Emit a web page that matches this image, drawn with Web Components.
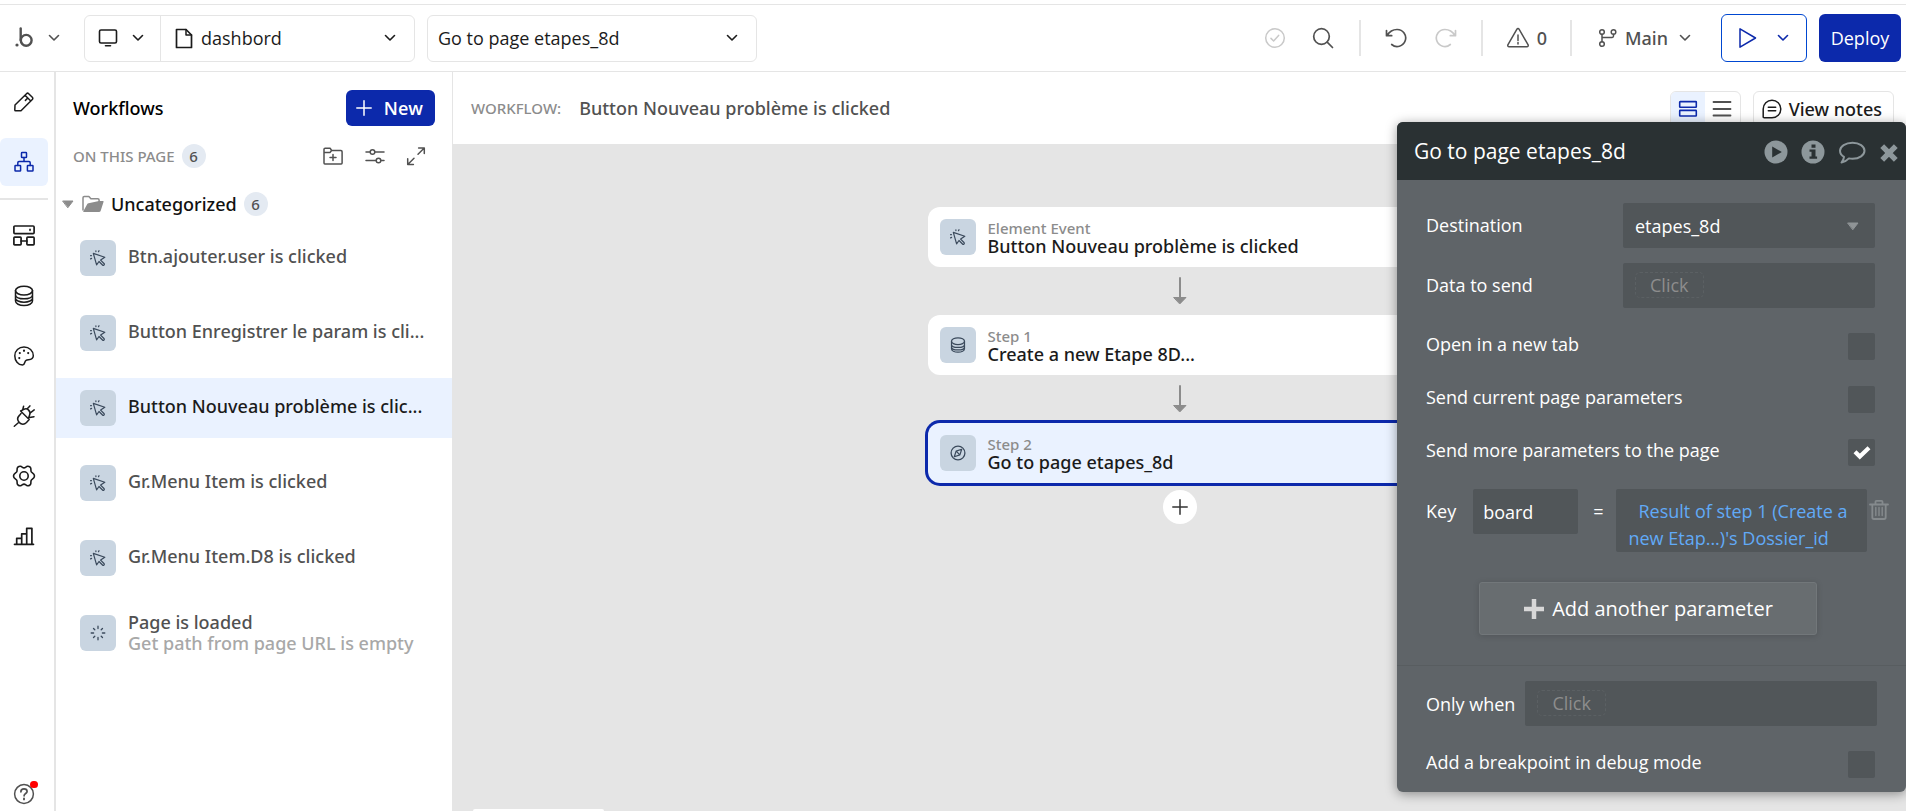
<!DOCTYPE html>
<html lang="en">
<head>
<meta charset="utf-8">
<meta name="viewport" content="width=device-width, initial-scale=1">
<title>Workflow editor</title>
<style>
  :root {
    --blue: #0c29ab;
    --blue-soft: #eaf2ff;
    --line: #e5e5e5;
    --ink: #1b1b1b;
    --ink-2: #515151;
    --ink-3: #8c8c8c;
    --tile: #c9d5e1;
    --field: #515659;
    --medium: "Noto Sans", "Open Sans", sans-serif;
  }
  body {
    margin: 0;
    font-family: "Open Sans", "Noto Sans", sans-serif;
    font-size: 18px;
    line-height: 24px;
    color: var(--ink);
    background: #fff;
  }
</style>
</head>
<body>
<flow-app></flow-app>

<script>
const ICONS = {
  logo: [20, 22, '<circle cx="3" cy="18" r="1.6" fill="currentColor" stroke="none"/><path d="M6.700 1.500v11.500" stroke-width="2.400"/><circle cx="12.200" cy="13.300" r="5.400" stroke-width="2.400"/>'],
  chevron: [12, 8, '<path d="M1.500 1.500 6 6l4.500-4.500" stroke-width="1.600"/>'],
  monitor: [20, 18, '<rect x="1.500" y="1" width="17" height="13" rx="1.500" stroke-width="1.600"/><path d="M7.500 16.700h5" stroke-width="1.600"/>'],
  page: [18, 21, '<path d="M1.500 1.500h9.500l5.500 5.500v12.500h-15z" stroke-width="1.700"/><path d="M11 1.500v5.500h5.500" stroke-width="1.500"/>'],
  checkCircle: [22, 22, '<circle cx="11" cy="11" r="9.300"/><path d="m7 11.400 2.600 2.600 5-5.600"/>'],
  search: [22, 22, '<circle cx="9.500" cy="9.500" r="7.800" stroke-width="1.700"/><path d="m15.200 15.200 5.300 5.300" stroke-width="1.700"/>'],
  undo: [22, 22, '<path d="M1.500 3.500v5.200h5.200M2 8.500C4.500 4.500 8 2.500 12 2.500a8.500 8.500 0 1 1-5.300 15" stroke-width="1.700"/>'],
  redo: [22, 22, '<path d="M20.500 3.500v5.200h-5.200M20 8.500C17.500 4.500 14 2.500 10 2.500a8.500 8.500 0 1 0 5.300 15" stroke-width="1.700"/>'],
  warning: [24, 22, '<path d="M12 1.600c.5 0 .9.300 1.200.8l8.800 15.300c.6 1.100 0 2-1.100 2H3.100c-1.100 0-1.700-.9-1.100-2l8.800-15.300c.3-.5.700-.8 1.200-.8z"/><path d="M12 8v5.500M12 15.400v1.600"/>'],
  branch: [20, 20, '<circle cx="4" cy="4" r="2.300"/><circle cx="15.500" cy="4" r="2.300"/><circle cx="4" cy="16" r="2.300"/><path d="M4 6.300v7.400M15.500 6.300v1.800c0 .8-.5 1.300-1.300 1.300H4"/>'],
  play: [20, 22, '<path d="M2 1.800v18.400L17.500 11z" stroke-width="1.500"/>'],
  pencil: [24, 24, '<path d="m3 15 11.500-11.300c.7-.7 1.500-.7 2.200 0l3.600 3.600c.7.700.7 1.500 0 2.200L9 20.700H3.600c-.5 0-.8-.3-.8-.8zM13 5.200l5.800 5.800M15.800 8 13.400 10.400"/>'],
  tree: [24, 24, '<rect x="9.500" y="2.600" width="5" height="5" rx=".6"/><rect x="3" y="15.500" width="5.600" height="5.600" rx=".6"/><rect x="15.400" y="15.500" width="5.600" height="5.600" rx=".6"/><path d="M12 7.600V11.500M5.800 15.500v-2.800c0-.8.4-1.200 1.200-1.200h10c.8 0 1.200.4 1.200 1.200v2.800"/>'],
  blocks: [24, 24, '<rect x="1.900" y="2" width="20.200" height="7.600" rx="1" stroke-width="1.700"/><path d="M18 5.200v1.200"/><rect x="1.900" y="13.200" width="7.200" height="7.600" rx=".8" stroke-width="1.700"/><rect x="14.900" y="13.200" width="7.200" height="7.600" rx=".8" stroke-width="1.700"/><path d="M9 17h6" stroke-width="1.700"/>'],
  database: [24, 24, '<ellipse cx="12" cy="6.600" rx="8.500" ry="4.400"/><path d="M3.500 6.600v10.500c0 2.500 3.800 4.500 8.500 4.500s8.500-2 8.500-4.500V6.600M3.500 10.800c0 2.400 3.800 4 8.500 4s8.500-1.600 8.500-4M3.500 14.200c0 2.200 3.800 4 8.500 4s8.500-1.800 8.500-4"/>'],
  palette: [24, 24, '<path d="M12 3C6.800 3 2.800 6.800 2.800 11.700c0 5 3.300 9.300 7.700 9.300 2.800 0 1.500-3.500 3.600-4.700 2-1.100 7.200.3 7.200-4.600C21.300 6.600 17.200 3 12 3z"/><path d="M12 6.700v.1M16.200 9v.1M7.800 9v.1M7.300 14v.1" stroke-width="2.200"/>'],
  plug: [24, 24, '<path d="m8.600 7 8.600 8.500-2.700 3c-2.200 2.200-5 2.200-7.100.1-2.100-2.200-2.200-5 0-7.200l1.600-1.800M8.600 7l3.300-1.700c2-.9 3.300-.6 4.700.8s1.900 3 1 5l-1.200 3.500M15.300 4.700l2.600-2.800M18.600 8.600l3.600-2.700M17.500 13.500l4.500-.8M10.700 5.700 11.600 2.300M6.900 18.300l-4.600 4"/>'],
  gear: [24, 24, '<path d="M12 3.900C13.500 3.900 14 2.600 15.500 2.300C17 2 18.600 3 18.800 4.400C19 5.900 18.700 6.800 19.300 7.900C20 9 22.500 9.500 22.500 12C22.500 14.500 20 15 19.300 16.100C18.700 17.200 19 18.100 18.800 19.600C18.600 21 17 22 15.500 21.700C14 21.400 13.500 20.100 12 20.100C10.500 20.100 10 21.400 8.500 21.700C7 22 5.400 21 5.200 19.600C5 18.100 5.300 17.200 4.700 16.100C4 15 1.500 14.500 1.500 12C1.500 9.500 4 9 4.700 7.900C5.300 6.800 5 5.900 5.200 4.400C5.400 3 7 2 8.500 2.300C10 2.600 10.500 3.900 12 3.900z" stroke-width="1.600"/><circle cx="12" cy="12" r="4.200" stroke-width="1.600"/>'],
  bars: [24, 24, '<path d="M2.500 20.300h19M4.700 20.300v-6h5v6M9.700 20.300v-10.500h5v10.500M14.700 20.300V4.300h5.200v16" stroke-width="1.700"/>'],
  help: [24, 24, '<circle cx="12" cy="12" r="9.400"/><path d="M8.900 9.800c0-1.800 1.300-2.900 3.100-2.900s3.100 1 3.100 2.600c0 2-3 2.100-3 4.300" stroke-width="1.700"/><path d="M12 16.400v1" stroke-width="1.900"/>'],
  plusThin: [16, 16, '<path d="M8 .8v14.400M.8 8h14.400"/>'],
  folderAdd: [22, 20, '<path d="M2 17V3.300c0-.7.400-1.100 1.100-1.100h5l1.500 2.300h9.300c.8 0 1.200.4 1.200 1.200V17c0 .6-.3.900-.9.900H2.900c-.6 0-.9-.3-.9-.9zM2 6.500h6l1.600-2M11 8.500v6M8 11.500h6"/>'],
  sliders: [20, 18, '<circle cx="7.500" cy="5" r="2.300"/><circle cx="13.500" cy="13.500" r="2.300"/><path d="M1 5h4.200M9.800 5H19M1 13.500h10.200M15.800 13.500H19"/>'],
  expand: [20, 20, '<path d="M12 8.200 18 2.200M12.600 1.900h5.700v5.700M8 12.200 2 18.200M1.700 12.800v5.700h5.700"/>'],
  caret: [12, 8, '<path d="M1 1h10L6 7.500z" fill="currentColor" stroke-width="1"/>'],
  folder: [22, 18, '<path d="M1 15V2.800C1 2 1.400 1.500 2.300 1.500h4.600l2 2.300h7c.8 0 1.200.4 1.200 1.200v2" stroke-width="1.500"/><path d="M1.200 16.500 5.300 9c.3-.5.600-.7 1.200-.7L17 6h3.800c.7 0 .9.500.7 1.100l-2.800 8.700c-.2.700-.6 1.200-1.400 1.200H1.500z" fill="currentColor" stroke="none"/>'],
  cursor: [18, 18, '<path d="m4.300 4.400 3.300 11.400 2.400-3.300 3.500 3.500c.5.500 1 .5 1.500 0s.5-1 0-1.500l-3.400-3.400 4.200-2.800z" stroke-width="1.200"/><path d="M6.900 2.600v-.8M9.500 2.700l.5-1M2.400 6.700H1.600M2.600 9.400l-1 .5" stroke-width="1.200"/>'],
  loading: [18, 18, '<path d="M9 2.200v2.400M9 13.400v2.400M2.200 9h2.400M13.400 9h2.400M4.500 4.500l1.300 1.300M12.200 12.200l1.300 1.300M4.500 13.500l1.300-1.300M12.200 5.800l1.300-1.300" stroke-width="1.300"/>'],
  data: [18, 18, '<ellipse cx="9" cy="5.200" rx="6.500" ry="3.400" stroke-width="1.200"/><path d="M2.500 5.200v7.600c0 1.900 2.900 3.400 6.500 3.400s6.500-1.500 6.500-3.400V5.200M2.500 8.400c0 1.800 2.900 3 6.500 3s6.500-1.200 6.500-3M2.500 10.900c0 1.700 2.900 3 6.500 3s6.500-1.300 6.500-3" stroke-width="1.200"/>'],
  compass: [18, 18, '<circle cx="9" cy="9" r="6.900" stroke-width="1.300"/><path d="m12.700 5.300-1.800 5.600-5.600 1.800 1.800-5.600zM7.900 7.900l2.200 2.200" stroke-width="1.200"/>'],
  arrowDown: [14, 28, '<path d="M7 1v20" stroke-width="2"/><path d="M1 20.500h12L7 26.700z" fill="currentColor" stroke-width="1"/>'],
  rows: [20, 18, '<rect x="1.700" y="1.600" width="16.600" height="5.600" rx=".5" stroke-width="1.600"/><rect x="1.700" y="10.400" width="16.600" height="5.600" rx=".5" stroke-width="1.600"/>'],
  list: [20, 18, '<path d="M1.500 2h17M1.500 9h17M1.500 15.500h17" stroke-width="1.800"/>'],
  note: [20, 20, '<path d="M10 1.200a8.800 8.800 0 1 1 0 17.600H2.200c-.6 0-1-.4-1-1V10A8.800 8.800 0 0 1 10 1.200z"/><path d="M6.300 8.300h7.400M6.300 11.700h7.400"/>'],
  playDisc: [24, 24, '<circle cx="12" cy="12" r="11.500" fill="currentColor" stroke="none"/><path d="M8.200 6.500v11l9.600-5.500z" fill="#2a3133" stroke="none"/>'],
  infoDisc: [24, 24, '<circle cx="12" cy="12" r="11.500" fill="currentColor" stroke="none"/><path d="M10.500 4.500h4v3.300h-4zM8.500 9.600h6v7h1.600v2.200H8.500v-2.200h2v-4.800h-2z" fill="#2a3133" stroke="none"/>'],
  bubble: [28, 24, '<path d="M14.500 2.800c7 0 12 3.600 12 8s-5 8-12 8c-1.300 0-2.500-.1-3.600-.4-2 2.100-4.300 3.600-7.400 4.200 1.400-1.600 2.300-3.500 2.500-5.700C3.300 15.400 2 13.200 2 10.800c0-4.400 5.500-8 12.500-8z" stroke-width="2"/>'],
  close: [20, 20, '<path d="m3.200 4.200 13.600 13.600M16.800 4.200 3.200 17.800" stroke-width="5.400" stroke-linecap="butt"/>'],
  trash: [20, 22, '<path d="M1 5.500h18M3.300 5.500v12.800c0 1 .6 1.700 1.600 1.700h10.200c1 0 1.600-.7 1.600-1.700V5.500M6.500 5V2.800c0-.6.400-1 1-1h5c.6 0 1 .4 1 1V5" stroke-width="1.800"/><path d="M6.800 8.500v8M10 8.500v8M13.200 8.500v8" stroke-width="1.400"/>'],
  plusBold: [22, 22, '<path d="M11 1v20M1 11h20" stroke-width="4.500" stroke-linecap="butt"/>'],
  tick: [18, 14, '<path d="m2 5.800 4.800 4.700L16 1.800" stroke-width="4.200" stroke-linecap="butt" stroke-linejoin="miter"/>']
};

class FlowIcon extends HTMLElement {
  connectedCallback() {
    const [w, h, body] = ICONS[this.getAttribute('name')];
    const root = this.shadowRoot || this.attachShadow({ mode: 'open' });
    root.innerHTML = `<style>:host{display:block;flex:none;width:${w}px;height:${h}px}svg{display:block}</style>
      <svg width="${w}" height="${h}" viewBox="0 0 ${w} ${h}" fill="none" stroke="currentColor" stroke-width="1.500" stroke-linecap="round" stroke-linejoin="round" aria-hidden="true">${body}</svg>`;
  }
}
customElements.define('flow-icon', FlowIcon);

const RESET = `
  * { box-sizing: border-box; }
  button, select, input { font: inherit; color: inherit; background: none; border: 0; padding: 0; margin: 0; appearance: none; border-radius: 0; text-align: left; }
  h1, h2, h3, p { margin: 0; font: inherit; }
`;
const define = (name, html) => customElements.define(name, class extends HTMLElement {
  constructor() {
    super();
    this.attachShadow({ mode: 'open' }).innerHTML = `<style>${RESET}</style>${html}`;
  }
});

define('flow-badge', `
  <style>
    :host { display: grid; place-items: center; width: 24px; height: 24px; border-radius: 12px; background: #e4eaf2; color: var(--ink-2); font-family: var(--medium); font-size: 15px; font-weight: 500; }
  </style><slot></slot>`);

/* A drop-down with its chevron laid in the same grid cell. */
class FlowSelect extends HTMLElement {
  connectedCallback() {
    const root = this.shadowRoot || this.attachShadow({ mode: 'open' });
    root.innerHTML = `<style>${RESET}
      :host { display: grid; align-items: center; height: 100%; }
      select, flow-icon { grid-area: 1 / 1; }
      select { width: 100%; height: 100%; padding: 0 36px 0 var(--select-pad, 0); color: inherit; }
      flow-icon { justify-self: end; margin-right: var(--chevron-gap, 18px); pointer-events: none; color: var(--chevron, currentColor); }
    </style>
    <select aria-label="${this.getAttribute('label')}"><option>${this.getAttribute('value')}</option></select>
    <flow-icon name="${this.getAttribute('icon') || 'chevron'}"></flow-icon>`;
  }
}
customElements.define('flow-select', FlowSelect);

define('flow-topbar', `
  <style>
    :host { display: block; padding-top: 4px; }
    header { display: flex; align-items: center; justify-content: space-between; height: 68px; padding: 0 5px 0 14px; border-top: 1px solid var(--line); border-bottom: 1px solid var(--line); }
    .group, .logo, .split, .warn, .branch, .run { display: flex; align-items: center; }
    .logo { gap: 14px; width: 70px; color: var(--ink-2); }
    .split, .target { height: 47px; border: 1px solid var(--line); border-radius: 6px; }
    .split { width: 331px; margin-right: 12px; }
    .device { display: flex; align-items: center; gap: 14px; height: 100%; padding: 0 16px 0 13px; border-right: 1px solid var(--line); }
    .split flow-icon[name=page] { margin: 0 8px 0 14px; }
    .split flow-select { flex: 1; }
    .target { width: 330px; --select-pad: 10px; }
    .tools { color: var(--ink-2); }
    .tools > button { display: flex; align-items: center; }
    .off { color: #c9c9c9; }
    .search { margin: 0 25px 0 26px; }
    .rule { width: 2px; height: 36px; background: var(--line); }
    .history { display: flex; gap: 28px; margin: 0 24px; }
    .warn { gap: 7px; margin: 0 23px; font-family: var(--medium); font-weight: 500; }
    .branch { gap: 7px; margin-left: 26px; margin-right: 30px; font-family: var(--medium); font-weight: 500; }
    .branch flow-icon:last-child { margin-left: 4px; }
    .run { gap: 19px; width: 86px; height: 48px; padding-left: 16px; margin-right: 12px; border: 1px solid #0047d1; border-radius: 6px; color: var(--blue); }
    .tools > .deploy { justify-content: center; width: 82px; height: 48px; border-radius: 6px; background: var(--blue); color: #fff; }
  </style>
  <header>
    <div class="group">
      <button class="logo" aria-label="Main menu"><flow-icon name="logo"></flow-icon><flow-icon name="chevron"></flow-icon></button>
      <div class="split">
        <button class="device" aria-label="Device"><flow-icon name="monitor"></flow-icon><flow-icon name="chevron"></flow-icon></button>
        <flow-icon name="page"></flow-icon>
        <flow-select label="Page" value="dashbord"></flow-select>
      </div>
      <div class="target"><flow-select label="Element" value="Go to page etapes_8d"></flow-select></div>
    </div>
    <div class="group tools">
      <button class="off" aria-label="Saved"><flow-icon name="checkCircle"></flow-icon></button>
      <button class="search" aria-label="Search"><flow-icon name="search"></flow-icon></button>
      <span class="rule"></span>
      <div class="history">
        <button aria-label="Undo"><flow-icon name="undo"></flow-icon></button>
        <button class="off" aria-label="Redo"><flow-icon name="redo"></flow-icon></button>
      </div>
      <span class="rule"></span>
      <button class="warn"><flow-icon name="warning"></flow-icon>0</button>
      <span class="rule"></span>
      <button class="branch"><flow-icon name="branch"></flow-icon>Main<flow-icon name="chevron"></flow-icon></button>
      <button class="run" aria-label="Preview"><flow-icon name="play"></flow-icon><flow-icon name="chevron"></flow-icon></button>
      <button class="deploy">Deploy</button>
    </div>
  </header>`);

define('flow-rail', `
  <style>
    :host { display: block; border-right: 2px solid var(--line); }
    nav { display: flex; flex-direction: column; gap: 12px; height: 100%; padding-top: 6px; }
    button { display: grid; place-items: center; width: 48px; height: 48px; flex: none; border-radius: 6px; }
    .on { background: var(--blue-soft); color: var(--blue); }
    hr { width: 48px; height: 2px; margin: 0; border: 0; background: var(--line); flex: none; }
    .help { position: relative; height: 34px; margin-top: auto; color: var(--ink-2); }
    .help::after { content: ""; position: absolute; right: 10px; top: 4px; width: 8px; height: 7px; border-radius: 4px; background: #f00; }
  </style>
  <nav aria-label="Editor">
    <button aria-label="Design"><flow-icon name="pencil"></flow-icon></button>
    <button class="on" aria-label="Workflow"><flow-icon name="tree"></flow-icon></button>
    <hr>
    <button aria-label="Backend"><flow-icon name="blocks"></flow-icon></button>
    <button aria-label="Data"><flow-icon name="database"></flow-icon></button>
    <button aria-label="Styles"><flow-icon name="palette"></flow-icon></button>
    <button aria-label="Plugins"><flow-icon name="plug"></flow-icon></button>
    <button aria-label="Settings"><flow-icon name="gear"></flow-icon></button>
    <button aria-label="Logs"><flow-icon name="bars"></flow-icon></button>
    <button class="help" aria-label="Help"><flow-icon name="help"></flow-icon></button>
  </nav>`);

define('flow-tile', `
  <style>
    :host { display: grid; place-items: center; flex: none; width: 36px; height: 36px; border-radius: 6px; background: var(--tile); color: #3b4a5c; }
  </style><slot></slot>`);

define('flow-item', `
  <style>
    :host { display: block; color: var(--ink-2); }
    :host([selected]) { color: var(--ink); }
    :host([selected]) button { background: var(--blue-soft); }
    button { display: flex; align-items: center; gap: 12px; width: 100%; height: 60px; padding: 0 24px; font-family: var(--medium); font-weight: 500; line-height: 21px; }
    .text { display: block; min-width: 0; white-space: nowrap; padding-bottom: 4px; }
    :host([two-line]) .text { padding-bottom: 0; }
    ::slotted([slot=note]) { display: block; color: #a8a8a8; }
  </style>
  <button><flow-tile><slot name="icon"></slot></flow-tile><span class="text"><slot></slot><slot name="note"></slot></span></button>`);

define('flow-list', `
  <style>
    :host { display: block; padding-top: 18px; border-right: 1px solid var(--line); font-family: var(--medium); font-weight: 500; }
    .head, .section, .folder { display: flex; align-items: center; }
    .head { justify-content: space-between; padding: 0 17px; color: #000; }
    .new { display: flex; align-items: center; gap: 12px; height: 36px; padding: 0 12px 0 10px; border-radius: 6px; background: var(--blue); color: #fff; font-family: "Open Sans", sans-serif; font-weight: 600; }
    .section { margin-top: 18px; padding: 0 26px 0 17px; gap: 7px; font-size: 15px; color: var(--ink-3); }
    .tools { display: flex; align-items: center; gap: 21px; margin-left: auto; color: var(--ink-2); }
    .folder { margin-top: 24px; padding-left: 6px; gap: 7px; color: #111; }
    .folder flow-icon { color: var(--ink-3); }
    .folder flow-icon[name=folder] { margin-left: 1px; }
    .items { display: grid; gap: 15px; margin-top: 12px; }
  </style>
  <div class="head"><h2>Workflows</h2><button class="new"><flow-icon name="plusThin"></flow-icon>New</button></div>
  <div class="section"><span>ON THIS PAGE</span><flow-badge>6</flow-badge>
    <div class="tools">
      <button aria-label="New folder"><flow-icon name="folderAdd"></flow-icon></button>
      <button aria-label="Filter"><flow-icon name="sliders"></flow-icon></button>
      <button aria-label="Expand"><flow-icon name="expand"></flow-icon></button>
    </div>
  </div>
  <div class="folder"><flow-icon name="caret"></flow-icon><flow-icon name="folder"></flow-icon><span>Uncategorized</span><flow-badge>6</flow-badge></div>
  <div class="items">
    <flow-item><flow-icon slot="icon" name="cursor"></flow-icon>Btn.ajouter.user is clicked</flow-item>
    <flow-item><flow-icon slot="icon" name="cursor"></flow-icon>Button Enregistrer le param is cli...</flow-item>
    <flow-item selected><flow-icon slot="icon" name="cursor"></flow-icon>Button Nouveau problème is clic...</flow-item>
    <flow-item><flow-icon slot="icon" name="cursor"></flow-icon>Gr.Menu Item is clicked</flow-item>
    <flow-item><flow-icon slot="icon" name="cursor"></flow-icon>Gr.Menu Item.D8 is clicked</flow-item>
    <flow-item two-line><flow-icon slot="icon" name="loading"></flow-icon>Page is loaded<span slot="note">Get path from page URL is empty</span></flow-item>
  </div>`);

define('flow-step', `
  <style>
    :host { display: flex; align-items: center; gap: 12px; width: 504px; height: 60px; padding: 0 12px; box-sizing: border-box; border-radius: 12px; background: #fff; font-family: var(--medium); font-weight: 500; }
    :host([selected]) { background: var(--blue-soft); box-shadow: 0 0 0 3px var(--blue); }
    .text { display: grid; line-height: 18px; }
    ::slotted([slot=kind]) { font-size: 15px; color: var(--ink-3); }
  </style>
  <flow-tile><slot name="icon"></slot></flow-tile>
  <div class="text"><slot name="kind"></slot><span><slot></slot></span></div>`);

define('flow-canvas', `
  <style>
    :host { display: flex; flex-direction: column; min-width: 0; }
    .bar { display: flex; align-items: flex-start; height: 72px; padding: 19px 12px 0 18px; font-family: var(--medium); font-weight: 500; }
    .bar p { display: flex; align-items: center; gap: 18px; height: 34px; color: var(--ink-2); }
    .bar p span { font-size: 15px; color: var(--ink-3); }
    .modes { display: flex; width: 71px; height: 36px; margin: 0 12px 0 auto; border: 1px solid var(--line); border-radius: 6px; overflow: hidden; color: var(--ink-2); }
    .modes button { display: grid; place-items: center; flex: 1; height: 34px; }
    .modes .on { background: var(--blue-soft); color: var(--blue); }
    .notes { display: flex; align-items: center; gap: 7px; height: 36px; padding: 0 11px 0 8px; border: 1px solid var(--line); border-radius: 6px; }
    .stage { display: flex; flex-direction: column; align-items: center; flex: 1; padding-top: 63px; background: #e5e5e5; }
    .stage > flow-icon { margin: 10px 0; color: #8c8c8c; }
    .add { display: grid; place-items: center; width: 34px; height: 34px; margin-top: 7px; border-radius: 17px; background: #fff; color: #333; }
    .tab { align-self: flex-start; width: 131px; height: 2px; margin: auto 0 0 20px; border-radius: 4px 4px 0 0; background: #fff; }
  </style>
  <div class="bar">
    <p><span>WORKFLOW:</span>Button Nouveau problème is clicked</p>
    <div class="modes">
      <button class="on" aria-label="Cards"><flow-icon name="rows"></flow-icon></button>
      <button aria-label="List"><flow-icon name="list"></flow-icon></button>
    </div>
    <button class="notes"><flow-icon name="note"></flow-icon>View notes</button>
  </div>
  <div class="stage">
    <flow-step><flow-icon slot="icon" name="cursor"></flow-icon><span slot="kind">Element Event</span>Button Nouveau problème is clicked</flow-step>
    <flow-icon name="arrowDown"></flow-icon>
    <flow-step><flow-icon slot="icon" name="data"></flow-icon><span slot="kind">Step 1</span>Create a new Etape 8D...</flow-step>
    <flow-icon name="arrowDown"></flow-icon>
    <flow-step selected><flow-icon slot="icon" name="compass"></flow-icon><span slot="kind">Step 2</span>Go to page etapes_8d</flow-step>
    <button class="add" aria-label="Add step"><flow-icon name="plusThin"></flow-icon></button>
    <div class="tab"></div>
  </div>`);

/* One tick-box row of the inspector: the label and its box share a root. */
class FlowCheck extends HTMLElement {
  connectedCallback() {
    const root = this.shadowRoot || this.attachShadow({ mode: 'open' });
    const on = this.hasAttribute('checked');
    root.innerHTML = `<style>${RESET}
      :host { display: block; }
      label { display: flex; align-items: flex-start; justify-content: space-between; line-height: 22px; }
      .box { display: grid; place-items: center; }
      .box > * { grid-area: 1 / 1; }
      input { width: 27px; height: 27px; border-radius: 2px; background: var(--field); }
      flow-icon { color: #fff; pointer-events: none; }
    </style>
    <label>${this.getAttribute('label')}<span class="box"><input type="checkbox" ${on ? 'checked' : ''}>${on ? '<flow-icon name="tick"></flow-icon>' : ''}</span></label>`;
  }
}
customElements.define('flow-check', FlowCheck);

define('flow-inspector', `
  <style>
    :host { display: block; width: 509px; border-radius: 6px; overflow: hidden; background: #5f6468; color: #fff; box-shadow: 0 2px 12px rgba(0, 0, 0, .4); }
    header { display: flex; align-items: center; gap: 13px; height: 58px; padding: 2px 7px 0 17px; background: #2a3133; color: #8d979b; }
    h2 { flex: 1; padding-bottom: 2px; font-size: 21px; color: #fff; }
    .main { padding: 23px 31px 30px 29px; }
    .row { display: flex; align-items: center; justify-content: space-between; height: 45px; margin-bottom: 15px; }
    .row > span { padding-bottom: 2px; }
    .field { background: var(--field); border-radius: 2px; }
    .row .field { width: 252px; height: 45px; }
    .row flow-select { --select-pad: 12px; --chevron-gap: 16px; --chevron: #8f9496; }
    .click { display: flex; align-items: center; padding: 0 12px 2px; color: #8d8d8d; }
    .click span { padding: 0 14px; border: 1px dashed #5b6063; border-radius: 5px; }
    .checks { display: grid; gap: 26px; margin-top: 25px; }
    .param { display: flex; align-items: flex-start; margin: 23px -14px 0 0; line-height: 27px; }
    .param label, .param .eq { padding-top: 9px; }
    .param input { width: 105px; height: 45px; margin: 0 15px 0 17px; padding: 0 10px; }
    .expr { flex: 1; height: 63px; margin: 0 2px 0 13px; padding: 9px 12px 0; text-indent: 10px; color: #61aaf7; overflow: hidden; }
    .trash { margin-top: 10px; color: #858a8d; }
    .more { display: flex; align-items: center; justify-content: center; gap: 7px; width: 338px; height: 53px; margin: 30px auto 0 53px; border: 1px solid #72777a; border-radius: 3px; background: #686d70; font-size: 20px; box-shadow: 0 1px 6px rgba(0, 0, 0, .15); }
    .more flow-icon { color: #d8d8d8; }
    .foot { padding: 15px 29px 14px; border-top: 1px solid #585d60; }
    .when { display: flex; align-items: center; gap: 10px; margin-bottom: 25px; }
    .when .field { flex: 1; height: 45px; }
    .foot flow-check { margin-right: 2px; }
  </style>
  <header>
    <h2>Go to page etapes_8d</h2>
    <button aria-label="Run"><flow-icon name="playDisc"></flow-icon></button>
    <button aria-label="Info"><flow-icon name="infoDisc"></flow-icon></button>
    <button aria-label="Comment"><flow-icon name="bubble"></flow-icon></button>
    <button aria-label="Close"><flow-icon name="close"></flow-icon></button>
  </header>
  <div class="main">
    <div class="row"><span>Destination</span><div class="field"><flow-select label="Destination" value="etapes_8d" icon="caret"></flow-select></div></div>
    <div class="row"><span>Data to send</span><button class="field click"><span>Click</span></button></div>
    <div class="checks">
      <flow-check label="Open in a new tab"></flow-check>
      <flow-check label="Send current page parameters"></flow-check>
      <flow-check label="Send more parameters to the page" checked></flow-check>
    </div>
    <div class="param">
      <label for="key">Key</label>
      <input class="field" id="key" value="board">
      <span class="eq">=</span>
      <button class="field expr">Result of step 1 (Create a new Etap...)'s Dossier_id</button>
      <button class="trash" aria-label="Delete parameter"><flow-icon name="trash"></flow-icon></button>
    </div>
    <button class="more"><flow-icon name="plusBold"></flow-icon>Add another parameter</button>
  </div>
  <div class="foot">
    <div class="when"><span>Only when</span><button class="field click"><span>Click</span></button></div>
    <flow-check label="Add a breakpoint in debug mode"></flow-check>
  </div>`);

define('flow-app', `
  <style>
    :host { display: flex; flex-direction: column; position: relative; min-height: 100vh; overflow: hidden; }
    main { display: grid; grid-template-columns: 56px 397px minmax(0, 1fr); flex: 1; }
    /* The inspector floats over the canvas. */
    flow-inspector { position: absolute; top: 122px; right: 0; }
  </style>
  <flow-topbar></flow-topbar>
  <main><flow-rail></flow-rail><flow-list></flow-list><flow-canvas></flow-canvas></main>
  <flow-inspector></flow-inspector>`);
</script>
</body>
</html>
